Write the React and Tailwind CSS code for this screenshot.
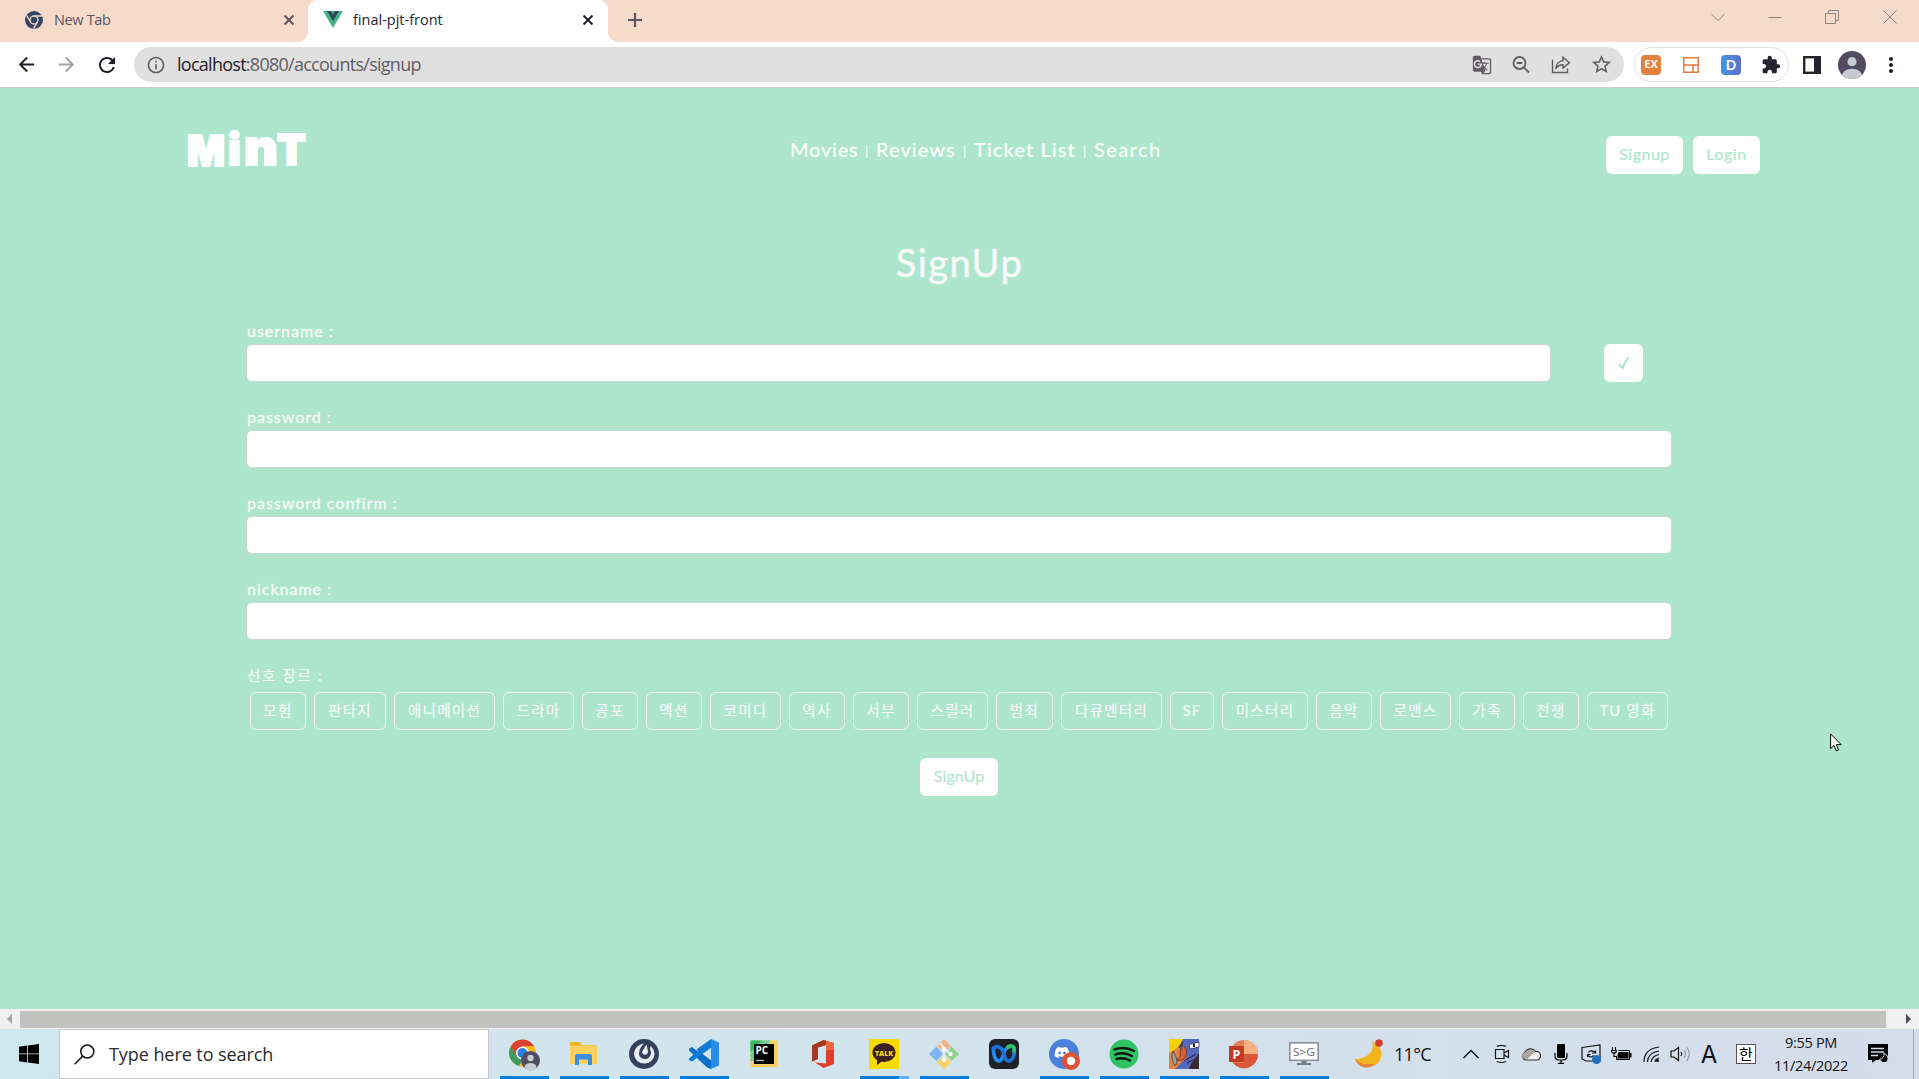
import React from "react";
import {
  MdArrowBack, MdArrowForward, MdRefresh, MdInfoOutline, MdGTranslate,
  MdStarBorder, MdExtension, MdMoreVert,
} from "react-icons/md";
import { FaDiscord } from "react-icons/fa";

const UI = "font-['Open_Sans','Noto_Sans_CJK_KR',sans-serif]";
const SITE = "font-[Lato,'Noto_Sans_CJK_KR',sans-serif]";

function Cross({ className }) {
  return (
    <svg viewBox="0 0 12 12" className={className} fill="none" stroke="currentColor" strokeWidth="1.9">
      <path d="M1.5 1.5 10.5 10.5M10.5 1.5 1.5 10.5" />
    </svg>
  );
}

function TabStrip() {
  return (
    <div className="flex h-[42px] shrink-0 items-stretch bg-[#f6daca]">
      <div className="flex w-[308px] items-center pl-[25px] pr-[13px] pb-[3px]">
        <svg viewBox="0 0 18 18" className="h-[18px] w-[18px]">
          <circle cx="9" cy="9" r="9" fill="#364563" />
          <circle cx="9" cy="9" r="4" fill="none" stroke="#f6daca" strokeWidth="1.3" />
          <path d="M9 5H17M5.6 11 1.6 4.3M12.4 11 8.6 17.6" stroke="#f6daca" strokeWidth="1.3" />
        </svg>
        <span className="ml-[11px] grow text-[14.5px] tracking-[-0.35px] text-[#5a5461]">New Tab</span>
        <Cross className="h-3 w-3 text-[#5b5160]" />
      </div>
      <div className="relative flex w-[300px] items-center rounded-t-[9px] bg-white pl-[15px] pr-[14px] pb-[3px]">
        <span className="absolute bottom-0 -left-[10px] h-[10px] w-[10px] bg-white" />
        <span className="absolute bottom-0 -left-[10px] h-[10px] w-[10px] rounded-br-[10px] bg-[#f6daca]" />
        <span className="absolute bottom-0 -right-[10px] h-[10px] w-[10px] bg-white" />
        <span className="absolute bottom-0 -right-[10px] h-[10px] w-[10px] rounded-bl-[10px] bg-[#f6daca]" />
        <svg viewBox="0 0 20 17" className="h-[17px] w-5">
          <path d="M0 0H20L10 17Z" fill="#41b883" />
          <path d="M4 0H8L10 3.4 12 0H16L10 10.3Z" fill="#35495e" />
        </svg>
        <span className="ml-[10px] grow text-[14.5px] tracking-[0px] text-[#28232e]">final-pjt-front</span>
        <Cross className="h-3 w-3 text-[#1f1b28]" />
      </div>
      <svg viewBox="0 0 14 14" className="ml-[20px] mt-[13px] h-[14px] w-[14px]" stroke="#5b5160" strokeWidth="2.2">
        <path d="M7 0V14M0 7H14" />
      </svg>
      <div className="ml-auto flex h-[34px] items-center text-[#8d8480]">
        <svg viewBox="0 0 14 14" className="mr-[43px] h-[14px] w-[14px]" fill="none" stroke="currentColor"><path d="M.5 4 7 10.5 13.5 4" /></svg>
        <svg viewBox="0 0 14 14" className="mr-[43px] h-[14px] w-[14px]" fill="none" stroke="currentColor"><path d="M.5 7.5H13.5" /></svg>
        <svg viewBox="0 0 14 14" className="mr-[44px] h-[14px] w-[14px]" fill="none" stroke="currentColor"><path d="M.5 3.5H10.5V13.5H.5ZM3.5 3V.5H13.5V10.5H11" /></svg>
        <svg viewBox="0 0 14 14" className="mr-[22px] h-[14px] w-[14px]" fill="none" stroke="currentColor"><path d="M.5 .5 13.5 13.5M13.5 .5 .5 13.5" /></svg>
      </div>
    </div>
  );
}

function Toolbar() {
  return (
    <div className="flex h-[46px] shrink-0 items-center border-b border-[#c9cccb] bg-white">
      <MdArrowBack className="ml-[15px] h-[23px] w-[23px] text-[#1f1b28]" />
      <MdArrowForward className="ml-[17px] h-[23px] w-[23px] text-[#a3a3a3]" />
      <MdRefresh className="ml-[17px] h-6 w-6 text-[#1f1b28]" />
      <div className="ml-[15px] flex h-[35px] w-[1490px] items-center rounded-full bg-[#e0e0e0] pl-[12px] text-[#605c62]">
        <MdInfoOutline className="h-5 w-5" />
        <span className="ml-[11px] grow text-[18px] leading-[35px] tracking-[-0.73px]">
          <span className="text-[#1f1b28]">localhost</span>:8080/accounts/signup
        </span>
        <MdGTranslate className="mr-[19px] h-5 w-5" />
        <svg viewBox="0 0 20 20" className="mr-[20px] h-5 w-5" fill="none" stroke="currentColor" strokeWidth="1.8">
          <circle cx="8.5" cy="8" r="6" /><path d="M5.700 8H11.300M12.800 12.300 18 17.500" />
        </svg>
        <svg viewBox="0 0 20 20" className="mr-[19px] h-5 w-5" fill="none" stroke="currentColor" strokeWidth="1.4">
          <path d="M1.5 4.5V17.5H16.5V13.5M12 2.3 18.5 7.7 12 13V9.8C8 9.8 6.2 11.3 4.8 13.8 5.1 9.2 7.4 6.2 12 5.6Z" />
        </svg>
        <MdStarBorder className="mr-[11px] h-[23px] w-[23px]" />
      </div>
      <div className="ml-[10px] flex h-[35px] w-[155px] items-center rounded-full border border-[#e0e0e3] pl-[6px]">
        <div className="flex h-5 w-5 items-center justify-center rounded-[4px] bg-[#e4813f] text-[11px] font-bold text-white">EX</div>
        <svg viewBox="0 0 16 16" className="ml-[22px] h-4 w-4" fill="none" stroke="#e27a45" strokeWidth="1.5">
          <path d="M.8 .8H15.2V15.2H.8ZM.8 8H15.2M10 8V15" />
        </svg>
        <div className="ml-[22px] flex h-5 w-5 items-center justify-center rounded-[4px] bg-gradient-to-r from-[#3f97e0] to-[#5d6fcb] text-[15px] font-semibold text-white">D</div>
        <MdExtension className="ml-[20px] h-5 w-5 text-[#28242f]" />
      </div>
      <svg viewBox="0 0 18 18" className="ml-[14px] h-[18px] w-[18px]">
        <rect x="1.2" y="1.2" width="15.6" height="15.6" fill="none" stroke="#28242f" strokeWidth="2.4" />
        <rect x="11" y="1" width="6" height="16" fill="#28242f" />
      </svg>
      <svg viewBox="0 0 28 28" className="ml-[17px] h-7 w-7">
        <clipPath id="avatarClip"><circle cx="14" cy="14" r="14" /></clipPath>
        <g clipPath="url(#avatarClip)">
          <rect width="28" height="28" fill="#524b61" />
          <circle cx="14" cy="10.7" r="4.6" fill="#c5cbd0" />
          <ellipse cx="14" cy="25" rx="10" ry="7.3" fill="#c5cbd0" />
        </g>
      </svg>
      <MdMoreVert className="ml-[13px] h-6 w-6 text-[#1f1b28]" />
    </div>
  );
}

function Header() {
  return (
    <header className="flex h-[86px] items-start pl-[185px] pr-[159px] pt-[39px]">
      <svg viewBox="0 0 126 42" className="h-[42px] w-[126px] overflow-visible font-[Inter] font-black" fill="#fff" stroke="#fff" strokeWidth="2" strokeLinejoin="round">
        <text x="2" y="38.8" fontSize="42" textLength="38" lengthAdjust="spacingAndGlyphs">M</text>
        <text x="43" y="37.8" fontSize="43">i</text>
        <text x="59" y="37.8" fontSize="49" textLength="34" lengthAdjust="spacingAndGlyphs">n</text>
        <text x="92" y="37.8" fontSize="42" textLength="29" lengthAdjust="spacingAndGlyphs">T</text>
      </svg>
      <nav className="ml-[479px] flex h-[44px] items-center text-[20px] leading-[26px] font-medium text-white">
        <a className="w-[75px] tracking-[0.75px]">Movies</a>
        <span className="w-[11px] pt-[3px] text-[13px]">|</span>
        <a className="w-[87px] tracking-[1.05px]">Reviews</a>
        <span className="w-[11px] pt-[3px] text-[13px]">|</span>
        <a className="w-[109px] tracking-[1.1px]">Ticket List</a>
        <span className="w-[11px] pt-[3px] text-[13px]">|</span>
        <a className="w-[70px] tracking-[1.4px]">Search</a>
      </nav>
      <div className="ml-auto mt-[9px] flex gap-[10px] text-[16px] text-[#aee6cd] [-webkit-text-stroke:0.15px]">
        <button className="h-[38px] w-[77px] rounded-md bg-white pb-[2px] tracking-[0.5px]">Signup</button>
        <button className="h-[38px] w-[67px] rounded-md bg-white pb-[2px] tracking-[0.5px]">Login</button>
      </div>
    </header>
  );
}

const GENRES = [
  ["모험", "w-14"], ["판타지", "w-[72px]"], ["애니메이션", "w-[101px]"], ["드라마", "w-[71px]"], ["공포", "w-14"],
  ["액션", "w-14"], ["코미디", "w-[71px]"], ["역사", "w-14"], ["서부", "w-14"], ["스릴러", "w-[71px]"],
  ["범죄", "w-[57px]"], ["다큐멘터리", "w-[101px]"], ["SF", "w-11"], ["미스터리", "w-[86px]"], ["음악", "w-14"],
  ["로맨스", "w-[71px]"], ["가족", "w-14"], ["전쟁", "w-14"], ["TU 영화", "w-[81px]"],
];

function Field({ label, width = "w-full", children }) {
  return (
    <div className="mb-[24px]">
      <label className="block h-[24px] pl-px text-[16px] leading-[22px] tracking-[1px] text-[#f8f9fa] [-webkit-text-stroke:0.3px]">{label}</label>
      <div className="flex h-[38px] items-start">
        <input className={`block h-[38px] rounded-md border border-[#ced4da] bg-white ${width}`} />
        {children}
      </div>
    </div>
  );
}

function Page() {
  return (
    <main className={`relative flex h-[921px] shrink-0 flex-col overflow-hidden bg-[#aee6cd] ${SITE}`}>
      <Header />
      <h1 className="mt-[58px] h-[60px] text-center text-[38px] leading-[60px] tracking-[1.5px] text-[#f8f9fa] [-webkit-text-stroke:0.4px]">SignUp</h1>
      <form className="ml-[246px] mt-[28px] w-[1426px]">
        <Field label="username :" width="w-[1305px]">
          <button type="button" className="ml-[53px] flex h-[38px] w-[39px] shrink-0 items-center justify-center rounded-md bg-white pb-px">
            <svg viewBox="0 0 12 14" className="h-[14px] w-3" fill="none" stroke="#aee6cd" strokeWidth="2.2">
              <path d="M1 8.5 4.5 12C6 8 8 4 11 1" />
            </svg>
          </button>
        </Field>
        <Field label="password :" />
        <Field label="password confirm :" />
        <Field label="nickname :" />
        <p className="h-[28px] pl-px text-[14.5px] leading-[23px] tracking-[1.7px] text-[#f8f9fa] [-webkit-text-stroke:0.15px]">선호 장르 :</p>
        <div className="flex w-[1425px] justify-center gap-2">
          {GENRES.map(([name, w]) => (
            <button type="button" key={name} className={`h-[38px] shrink-0 rounded-md border border-[#f8f9fa] pb-px pl-px text-[14.5px] tracking-[1.3px] whitespace-nowrap text-[#f8f9fa] [-webkit-text-stroke:0.15px] ${w}`}>{name}</button>
          ))}
        </div>
        <button type="button" className="mx-auto mt-[28px] block h-[38px] w-[78px] rounded-md bg-white pb-[2px] text-[16px] tracking-[0.1px] text-[#aee6cd] [-webkit-text-stroke:0.15px]">SignUp</button>
      </form>
      <svg viewBox="0 0 12 19" className="absolute top-[645px] left-[1830px] h-[19px] w-3">
        <path d="M.6 .9V15.6L4 12.4 6.3 17.9 8.6 16.9 6.3 11.6H11.2Z" fill="#fff" stroke="#000" />
      </svg>
    </main>
  );
}

function Scrollbar() {
  return (
    <div className="flex h-5 shrink-0 items-center bg-[#f0f0f0] pl-[7px]">
      <svg viewBox="0 0 5 10" className="h-[10px] w-[5px]"><path d="M5 0V10L0 5Z" fill="#a3a3a3" /></svg>
      <div className="ml-[8px] h-[17px] w-[1866px] bg-[#c1c1bf]" />
      <svg viewBox="0 0 5 10" className="ml-[20px] h-[10px] w-[5px]"><path d="M0 0V10L5 5Z" fill="#524b61" /></svg>
    </div>
  );
}

const Svg = ({ children }) => <svg viewBox="0 0 30 30" className="h-[30px] w-[30px] overflow-visible">{children}</svg>;

const APPS = [
  ["chrome", true, (
    <Svg>
      <circle cx="13.5" cy="14" r="13.5" fill="#fbbc16" />
      <path d="M1.8 7.3A13.5 13.5 0 0 1 25.2 7.3H13.5L7.6 17.4Z" fill="#dc4233" />
      <path d="M1.8 7.3 7.6 17.4 13.5 20.7 10 27A13.5 13.5 0 0 1 1.8 7.3Z" fill="#3f9a5f" />
      <circle cx="13.5" cy="14" r="6.5" fill="#fff" /><circle cx="13.5" cy="14" r="5" fill="#2a80dd" />
      <circle cx="21.5" cy="21.5" r="9.5" fill="#524b61" />
      <circle cx="21.5" cy="19" r="3.2" fill="#c5cbd0" /><ellipse cx="21.5" cy="28" rx="6" ry="4" fill="#c5cbd0" />
    </Svg>
  )],
  ["explorer", true, (
    <Svg>
      <path d="M1 3H11L13 6H27V25H1Z" fill="#efb524" /><path d="M1 6.5H28V25H1Z" fill="#fcd162" />
      <path d="M6 26V17.5Q6 15 8.500 15H20.500Q23 15 23 17.5V26H19V20.5H10V26Z" fill="#3c8ce0" />
    </Svg>
  )],
  ["mattermost", true, (
    <Svg>
      <circle cx="15" cy="15" r="15" fill="#364160" />
      <path d="M15 4.5C9 5.5 5 10 5 15.5A10.3 10 0 0 0 25.5 15.5C25.5 12 24 9 21.5 7L21 10C22.5 13 22.5 16 20 18.5 16 22 9.5 19 10 14 10.3 10 13 6.5 15 4.5Z" fill="#e9eef1" />
      <path d="M17.5 5.5 19 12.5C19 17 12.5 16.5 13.2 12.5Z" fill="#e9eef1" />
    </Svg>
  )],
  ["vscode", true, (
    <Svg>
      <path d="M22 0 8.5 12.3 3 8 0 9.5V11.5L18 28.5 22 30 23 22 7.5 10.5Z" fill="#0a6fc8" />
      <path d="M22 0 0 19.5V21L3 22.5 23 8Z" fill="#0d7bd6" />
      <path d="M22 0 30 3.5V26.5L22 30Z" fill="#268ee8" />
    </Svg>
  )],
  ["pycharm", false, (
    <Svg>
      <path d="M1.5 1.5H28.5V28H1.5Z" fill="#fcd05c" /><path d="M1.5 1.5H22L5 22H1.5Z" fill="#6dcf95" /><path d="M1.5 1.5H13L1.5 13Z" fill="#2fbd66" />
      <rect x="5" y="5" width="20" height="20" fill="#000" />
      <text x="6.5" y="15" fontSize="10" fontWeight="700" fill="#fff">PC</text><path d="M7 21.5H15" stroke="#aaa" strokeWidth="1.5" />
    </Svg>
  )],
  ["office", false, (
    <Svg>
      <path d="M3 6.5 14.5 1 25 4V25L14.5 29 6 23.5 17 24.5V6L9 8.5V20L3 22.5Z" fill="#dc3f2b" />
      <path d="M3 6.5 14.5 1 17 2V6L9 8.5V20L3 22.5Z" fill="#a33a22" /><path d="M17 2 25 4V11H17Z" fill="#ea6a38" />
    </Svg>
  )],
  ["kakaotalk", "split", (
    <Svg>
      <rect width="30" height="30" rx="1" fill="#f8dc00" />
      <ellipse cx="15" cy="13.5" rx="11.5" ry="9.5" fill="#3c1f24" /><path d="M8 20V26L14 21.5Z" fill="#3c1f24" />
      <text x="6" y="16.5" fontSize="7.5" fontWeight="800" textLength="18" lengthAdjust="spacingAndGlyphs" fill="#f8dc00">TALK</text>
    </Svg>
  )],
  ["git", true, (
    <Svg>
      <path d="M15 0 22 7 15 13 8 7Z" fill="#f4b183" /><path d="M7.5 7.5 14 15 7.5 22 0 15Z" fill="#7db5ee" />
      <path d="M22.5 7.5 30 15 22.5 22 16 15Z" fill="#8fd28d" /><path d="M15 17 22 23 15 30 8 23Z" fill="#fcce5e" />
      <path d="M11 4 15 9V22M15 9 21 14.5" stroke="#e4edf0" strokeWidth="1.8" fill="none" />
      <circle cx="15" cy="10" r="2.2" fill="#fff" /><circle cx="15" cy="21" r="2.2" fill="#fff" /><circle cx="21.5" cy="15" r="2.2" fill="#fff" />
    </Svg>
  )],
  ["webex", false, (
    <Svg>
      <rect width="30" height="30" rx="6" fill="#202029" />
      <path d="M4.5 9C4 15 6 22 10 22 15 22 13.5 9 20 8" fill="none" stroke="#258ceb" strokeWidth="3.6" strokeLinecap="round" />
      <path d="M4.5 9.5C9 5 13.5 9.5 15 15 16 20 18 22.5 20.5 22 24 20.5 25.5 16 25.5 11" fill="none" stroke="#1c72d9" strokeWidth="3.6" strokeLinecap="round" />
      <path d="M19 8Q22 5.5 25 8.5V12" fill="none" stroke="#2fc36e" strokeWidth="3.8" strokeLinecap="round" />
    </Svg>
  )],
  ["discord", true, (
    <Svg>
      <circle cx="15" cy="15" r="15" fill="#4a80dc" />
      <FaDiscord x="5" y="5.5" width="18" height="18" color="#fff" />
      <circle cx="22" cy="22" r="9" fill="#e15235" /><circle cx="22" cy="22" r="4.2" fill="#fff" />
    </Svg>
  )],
  ["spotify", true, (
    <Svg>
      <circle cx="15" cy="15" r="14.5" fill="#2dc262" />
      <path d="M5.5 10.5Q15.5 7 25 12M6.5 15.5Q15 12.5 23 17M7.5 20Q14.5 18 21 21.5" fill="none" stroke="#0b1510" strokeWidth="2.4" strokeLinecap="round" />
    </Svg>
  )],
  ["game", true, (
    <Svg>
      <rect width="30" height="30" fill="#e8833d" /><path d="M0 0H15L8 9 0 14Z" fill="#f8d300" />
      <path d="M14 0H30V30H6L14 22Q20 20 16 14L11 10Q11 4 14 0Z" fill="#5468bd" />
      <path d="M30 14V30H20L22 25Z" fill="#3c2830" /><path d="M15 22 27 15M18 24 30 18M14 3 10 9" stroke="#342e54" strokeWidth="1.3" />
      <path d="M13 6.5C18 7 19 16 15 20 12 22 8 22 7 20 11 20 12 17 11 13Z" fill="#dc5c32" stroke="#522c36" strokeWidth=".8" />
      <path d="M20 5.5 30 3V8L21 10Z" fill="#fff" stroke="#342e54" strokeWidth=".8" /><path d="M25 4.5V8" stroke="#222" strokeWidth="2" />
      <path d="M4 12Q1 19 6 27L8 24Q8 18 4 12Z" fill="#9ba0a5" stroke="#444" strokeWidth=".8" />
    </Svg>
  )],
  ["powerpoint", true, (
    <Svg>
      <circle cx="15" cy="15" r="14" fill="#e8805a" /><path d="M15 1A14 14 0 0 1 29 15H15Z" fill="#f4b183" /><path d="M15 15H29A14 14 0 0 1 4 24L15 24Z" fill="#dd5637" />
      <rect x="0" y="7" width="15" height="16" rx="1" fill="#c13a22" />
      <text x="3.5" y="19.5" fontSize="12.5" fontWeight="700" fill="#fff">P</text>
    </Svg>
  )],
  ["screentogif", true, (
    <Svg>
      <rect x=".8" y="3.8" width="28.4" height="17.5" fill="#fff" stroke="#8d8f9b" strokeWidth="1.6" />
      <path d="M12.5 22H17.5V24H22V26H8V24H12.5Z" fill="#777988" />
      <text x="4" y="16.5" fontSize="11" textLength="22" lengthAdjust="spacingAndGlyphs" fill="#6c6c72">S&gt;G</text>
    </Svg>
  )],
];

function Tray() {
  const line = { fill: "none", stroke: "#111", strokeWidth: 1.4 };
  return (
    <div className="ml-auto flex h-full items-center">
      <div className="flex w-[30px] justify-center"><svg viewBox="0 0 16 10" className="h-[10px] w-4" {...line}><path d="M.5 9 8 1.5 15.5 9" /></svg></div>
      <div className="flex w-[31px] justify-center">
        <svg viewBox="0 0 16 18" className="h-[18px] w-4" {...line} strokeWidth="1.2"><path d="M1.5 4.5H10V13.5H1.5ZM10 8 14.5 5.5V12.5L10 10M3 1.5Q7.5 -.5 12 1.5M3 16.5Q7.5 18.5 12 16.5" /></svg>
      </div>
      <div className="flex w-[28px] justify-center">
        <svg viewBox="0 0 20 14" className="h-[14px] w-5"><path d="M5 13A4 4 0 0 1 4 5.5 6 6 0 0 1 14.5 4.5 4.3 4.3 0 0 1 16 13Z" fill="#f0f0f0" stroke="#35312f" strokeWidth="1.2" /><path d="M4 5.5A6 6 0 0 1 14 5L6 12.5 2 11Q0 7 4 5.5Z" fill="#aaa6a2" /></svg>
      </div>
      <div className="flex w-[31px] justify-center">
        <svg viewBox="0 0 14 20" className="h-5 w-[14px]"><rect x="3" width="8" height="14" rx="1" fill="#000" /><path d="M1 9V12Q1 16 5 16H9Q13 16 13 12V9M7 16V19M4 19.3H10" fill="none" stroke="#000" strokeWidth="1.2" /></svg>
      </div>
      <div className="flex w-[30px] justify-center">
        <svg viewBox="0 0 20 20" className="h-5 w-5" {...line} strokeWidth="1.2"><path d="M1 3.5 19 1V17H5L1 15ZM14.5 6.5V9H11M6.5 13V10.5H9.5M7.5 8.5Q9 5.5 14 8M7 11.5Q10 14.5 12.5 11.5" /><circle cx="15.5" cy="15.5" r="4.5" fill="#1e73be" stroke="none" /></svg>
      </div>
      <div className="flex w-[31px] justify-center">
        <svg viewBox="0 0 21 14" className="h-[14px] w-[21px]"><path d="M7.5 3.5H18.5V12.5H5.5V9" fill="none" stroke="#000" /><path d="M7.500 5H17.500V11.500H6.500V8ZM19 6H20.5V10.5H19Z" fill="#000" /><path d="M1.5 0V3M4.5 0V3M0 3.5H6M.8 3.5V5Q3 7 5.2 5V3.5M3 6V9.5H6" fill="none" stroke="#000" strokeWidth="1.1" /></svg>
      </div>
      <div className="flex w-[28px] justify-center">
        <svg viewBox="0 0 17 16" className="h-4 w-[17px]" {...line} strokeWidth="1.2"><path d="M1 16Q1 3 16 1M4.5 16Q5 6.5 16 5M8 16Q9 10 16 8.5M12 16Q12 13 16 12" /><circle cx="14.5" cy="14.5" r="1.5" fill="#000" stroke="none" /></svg>
      </div>
      <div className="flex w-[29px] justify-center">
        <svg viewBox="0 0 20 16" className="h-4 w-5" {...line} strokeWidth="1.2"><path d="M1 5H4L8.5 1.5V14.5L4 11H1Z" /><path d="M11 6Q12.5 8 11 10" /><path d="M14 4Q17 8 14 12M17 1.5Q21.5 8 17 15" stroke="#999ba4" /></svg>
      </div>
      <span className="w-[29px] pl-px pt-px text-center font-[Inter] text-[24px] leading-[48px] text-[#111]">A</span>
      <span className="ml-[13px] flex h-5 w-5 items-center justify-center border border-[#555] bg-white font-['Noto_Sans_CJK_KR'] text-[15px] leading-[18px] text-black">한</span>
      <div className="ml-[15px] w-[80px] text-center text-[14.5px] leading-[23px] tracking-[-0.3px] text-[#111]">
        <div>9:55 PM</div>
        <div>11/24/2022</div>
      </div>
      <svg viewBox="0 0 21 20" className="ml-[17px] h-5 w-[21px]">
        <path d="M0 0H20V16H8L4 19V16H0Z" fill="#000" /><path d="M3 4.5H16M3 8H16M3 11.5H10" stroke="#d5deea" strokeWidth="1.3" />
        <path d="M16 9Q17 14 11.5 15.5 14 20 18 18.5 22 15 18.5 11Z" fill="#000" stroke="#d5deea" />
      </svg>
      <div className="ml-[24px] mr-[5px] h-full w-px bg-[#a4abb5]" />
    </div>
  );
}

function Taskbar() {
  return (
    <div className="flex h-[50px] shrink-0 items-center bg-gradient-to-r from-[#cfe7ee] via-[#d2e3ec] to-[#d5dcec]">
      <div className="flex w-[59px] justify-center pr-px">
        <svg viewBox="0 0 20 20" className="h-5 w-5"><path d="M0 2.7 8.2 1.5V9.5H0ZM9 1.4 20 0V9.5H9ZM0 10.3H8.2V18.4L0 17.2ZM9 10.3H20V20L9 18.5Z" /></svg>
      </div>
      <div className="flex h-[50px] w-[430px] items-center border border-[#c6c8c8] bg-white pl-[14px]">
        <svg viewBox="0 0 21 21" className="h-[21px] w-[21px]" fill="none" stroke="#111" strokeWidth="1.5"><circle cx="13.3" cy="7.5" r="6.5" /><path d="M8.7 12 .7 20.3" /></svg>
        <span className="ml-[14px] text-[18px] tracking-[-0.07px] text-[#2b2b2b]">Type here to search</span>
      </div>
      <div className="ml-[5px] flex h-full">
        {APPS.map(([name, open, icon]) => (
          <div key={name} className="flex h-full w-[60px] flex-col items-center">
            <div className="mt-[10px] h-[37px]">{icon}</div>
            {open && (
              <div className="flex h-[3px] w-[49px] bg-[#047cdc]">
                {open === "split" && <div className="ml-auto w-[10px] bg-[#66aee8]" />}
              </div>
            )}
          </div>
        ))}
      </div>
      <svg viewBox="0 0 30 30" className="ml-[20px] h-[30px] w-[30px]">
        <path d="M18 2C21 9 16 20 1 20 5 31 24 32 27.5 17 28 12 25 5 18 2Z" fill="#f2b51d" />
        <path d="M1 20Q5 23 9 25H21Q14 31 6.5 27 3 25 1 20Z" fill="#e5813e" />
        <circle cx="25" cy="4" r="3.8" fill="#cc3f2a" />
      </svg>
      <span className="ml-[10px] text-[18px] tracking-[-0.7px] text-[#111]">11°C</span>
      <Tray />
    </div>
  );
}

export default function App() {
  return (
    <div className={`flex h-[1079px] w-[1919px] flex-col overflow-hidden ${UI}`}>
      <TabStrip />
      <Toolbar />
      <Page />
      <Scrollbar />
      <Taskbar />
    </div>
  );
}
